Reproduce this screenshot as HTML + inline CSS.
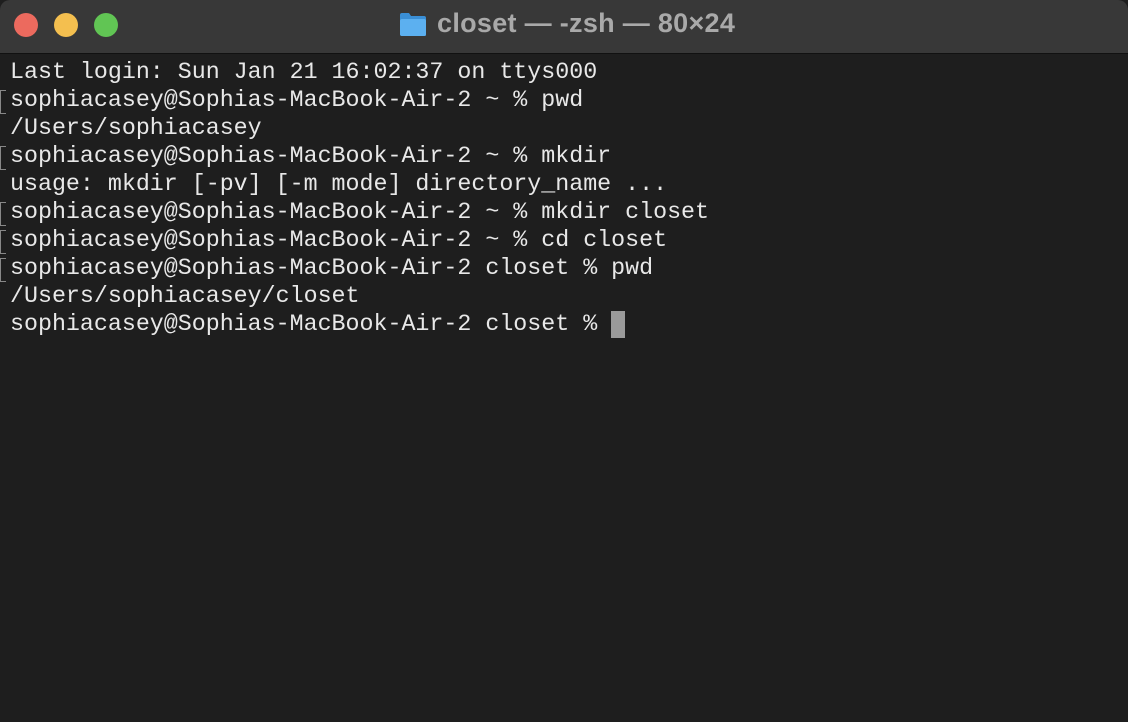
<!DOCTYPE html>
<html><head><style>
html,body{margin:0;padding:0;width:1128px;height:722px;overflow:hidden;background:#1e1e1e}
.tb{position:absolute;left:0;top:0;width:1128px;height:53px;background:#383838;border-bottom:1px solid #111;border-radius:10px 10px 0 0}
.dot{position:absolute;top:13px;width:24px;height:24px;border-radius:50%}
.title{position:absolute;left:437px;top:8px;font:bold 27px "Liberation Sans",sans-serif;color:#a9a9a9;white-space:pre;letter-spacing:0.3px}
.term{position:absolute;left:10px;top:58px;font:23.3px/28px "Liberation Mono",monospace;color:#e8e8e8;white-space:pre}
.br{position:absolute;left:0;width:5px;height:22px;border:1px solid #888;border-right:none}
.cur{position:absolute;left:611px;top:311px;width:14px;height:27px;background:#9a9a9a}
</style></head><body>
<div class="tb">
<div class="dot" style="left:14px;background:#ec6a5e"></div>
<div class="dot" style="left:54px;background:#f4bf4f"></div>
<div class="dot" style="left:94px;background:#61c554"></div>
<svg style="position:absolute;left:399px;top:12px" width="28" height="25" viewBox="0 0 28 25"><path d="M1 3 Q1 1 3 1 H10 L12 4 H25 Q27 4 27 6 V23 Q27 24 25 24 H3 Q1 24 1 22 Z" fill="#3a8fd6"/><rect x="1" y="7" width="26" height="17" rx="2" fill="#5cb0f0"/></svg>
<div class="title">closet — -zsh — 80×24</div>
</div>
<div class="br" style="top:90px"></div>
<div class="br" style="top:146px"></div>
<div class="br" style="top:202px"></div>
<div class="br" style="top:230px"></div>
<div class="br" style="top:258px"></div>
<div class="term">Last login: Sun Jan 21 16:02:37 on ttys000
sophiacasey@Sophias-MacBook-Air-2 ~ % pwd
/Users/sophiacasey
sophiacasey@Sophias-MacBook-Air-2 ~ % mkdir
usage: mkdir [-pv] [-m mode] directory_name ...
sophiacasey@Sophias-MacBook-Air-2 ~ % mkdir closet
sophiacasey@Sophias-MacBook-Air-2 ~ % cd closet
sophiacasey@Sophias-MacBook-Air-2 closet % pwd
/Users/sophiacasey/closet
sophiacasey@Sophias-MacBook-Air-2 closet % </div>
<div class="cur"></div>
</body></html>
